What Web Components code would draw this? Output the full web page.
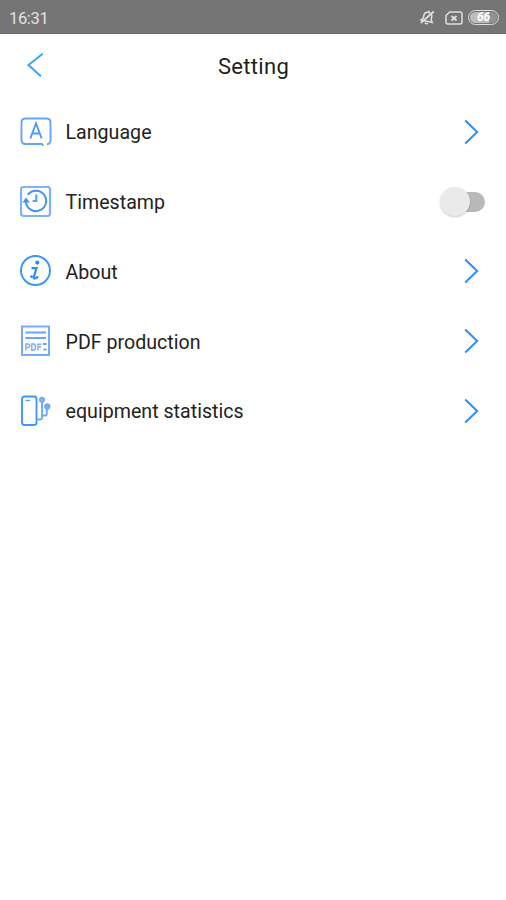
<!DOCTYPE html>
<html lang="en">
<head>
<meta charset="utf-8">
<title>Setting</title>
<style>
html,body{margin:0;height:100%;background:#fff}
body{font-family:Roboto,"Liberation Sans",sans-serif;color:#222;overflow:hidden}
</style>
</head>
<body>
<settings-screen></settings-screen>
<script>
const define = (name, html, setup) => {
  const template = document.createElement('template');
  template.innerHTML = html;
  customElements.define(name, class extends HTMLElement {
    constructor() {
      super();
      this.attachShadow({ mode: 'open' }).append(template.content.cloneNode(true));
    }
    connectedCallback() { if (setup) setup(this); }
  });
};

define('status-bar', `
<style>
:host{display:flex;box-sizing:border-box;height:34px;padding:2px 7px 0 9px;background:#757575;border-bottom:1px solid #686868;align-items:center;color:#e2e2e2}
.time{flex:1;font-size:16.5px;line-height:20px;letter-spacing:-.35px;padding-top:2px}
svg{display:block;fill:none;stroke:#dedede;stroke-width:1.5}
.bell{margin-right:9px}.sim{margin-right:5px}
.battery{box-sizing:border-box;width:31px;height:15px;border:1.5px solid #dedede;border-radius:8px;padding:1px;display:flex}
.level{flex:1;border-radius:6px;background:linear-gradient(90deg,#bdbdbd 70%,#929292 70%);color:#fff;font-size:12px;line-height:11px;font-weight:700;font-style:italic;text-align:center;letter-spacing:-.2px}
</style>
<span class="time">16:31</span>
<svg class="bell" width="17" height="17" viewBox="0 0 17 17"><g transform="rotate(12 8.500 8.500)"><path d="M2.800 12.300 4.500 10V7Q4.700 3.300 8.500 3.300T12.500 7v3l1.700 2.300ZM8.500 1.500v1.800M7 14q1.500 1.500 3 0"/></g><path d="M1.800 14 14.800 2.500" stroke-width="1.700"/></svg>
<svg class="sim" width="18" height="14" viewBox="0 0 18 14"><path d="M4.700 1H15q2 0 2 2v8q0 2-2 2H3q-2 0-2-2V4.500Z"/><path d="m6.500 5 5 4.500m0-4.500-5 4.500" stroke-width="1.900"/></svg>
<div class="battery"><span class="level">66</span></div>`);

define('title-bar', `
<style>
:host{display:grid;grid-template-columns:1fr auto 1fr;align-items:center;height:63px;box-sizing:border-box;padding:0 27px}
svg{display:block;margin-top:-1px;fill:none;stroke:#31a5f5;stroke-width:1.9}
h1{margin:2px 0 0 1px;font-weight:400;font-size:22px;line-height:30px;letter-spacing:.3px}
</style>
<svg width="17" height="24" viewBox="0 0 17 24"><path d="M15.700.8 1.400 12l12.500 11.300"/></svg>
<h1><slot></slot></h1>`);

define('chevron-right', `
<style>:host{display:block;margin-right:7px}svg{display:block;fill:none;stroke:#2c8df3;stroke-width:2}</style>
<svg width="15" height="26" viewBox="0 0 15 26"><path d="m1.200 1.500 12 11.500-12 11.500"/></svg>`);

define('toggle-switch', `
<style>
:host{display:flex;align-items:center;width:46px;height:30px;box-sizing:border-box}
.thumb{width:30px;height:29px;border-radius:50%;background:#eaeaea;box-shadow:0 1px 2px #0003;z-index:1}
.track{width:30px;height:20px;border-radius:10px;background:#b9b9b9;margin-left:-15px}
</style>
<span class="thumb"></span><span class="track"></span>`);

const icons = {
  language: '<path stroke="#64a5fc" d="M22 28H5.500q-4 0-4-4V6.500q0-4 4-4h21q4 0 4 4V24q0 4-3.500 4.200"/><path stroke="#64a5fc" d="m21.700 27.500 1.500 2.200"/><path d="m10.300 22.500 5.700-15 5.700 15M12.200 17.500h7.600" stroke-width="1.900"/>',
  time: '<rect x="1" y="1" width="29" height="29" rx="2.500" stroke="#7eb0fd" stroke-width="2.200"/><path stroke="#4791f3" stroke-width="2" d="M7.800 8.800A10.200 10.200 0 1 1 6.100 17.500V14"/><path fill="#4791f3" stroke="none" d="m2.400 16.500 3.600-5 3.800 5Z"/><path d="M16.300 8.500V16M16.300 15h-3.600" stroke="#5799f7" stroke-width="2"/>',
  about: '<circle cx="15.500" cy="15.500" r="14.500" stroke="#3997f7"/><circle cx="17.300" cy="7.600" r="2.100" fill="#2e8df2" stroke="none"/><path d="M11.500 13.200h5l-2.700 8.600q-.5 2 1.200 1.700 1.900-.5 3-2.200M10.500 22.300l2-1.500" stroke="#2e8df2" stroke-width="2.200"/>',
  pdf: '<path stroke="#76abfd" stroke-width="2" d="M2 1.500h27v28.500H2Z"/><path stroke="#65a6fc" d="M5.500 7.500h20.500M5.500 13h20.500M23 19h3.500M23.500 24.500h3"/><path stroke="#7caffc" stroke-width="1.400" d="M5.800 25.500v-6.500h2.200q1.800 0 1.800 1.700T8 22.500H5.800M11.800 19v6.200H13q2.500 0 2.500-3T13.500 19ZM18 25.500v-6.300h3.500M18 22h3"/>',
  equipment: '<rect x="2" y="1.500" width="14.500" height="28.500" rx="2.500" stroke="#3d98fa" stroke-width="1.900"/><path stroke="#539ff6" stroke-width="1.400" d="M5.500 5.500H10"/><path stroke="#6dacfc" stroke-width="1.900" d="M17 24.500h3q2 0 2-2V6M22.500 20.500h2.500q1.800 0 1.800-2V12"/><circle cx="22" cy="4.800" r="2.100" fill="#8bbdfc" stroke="#6dacfc"/><circle cx="27.300" cy="11.500" r="2.200" fill="#6dacfc" stroke="#6dacfc"/>'
};

define('setting-icon', `
<style>:host{display:block;flex:none}svg{display:block;fill:none;stroke:#4e9af8;stroke-width:1.900}</style>
<svg width="32" height="32" viewBox="0 0 32 32"></svg>`,
  el => { el.shadowRoot.querySelector('svg').innerHTML = icons[el.getAttribute('name')]; });

define('setting-row', `
<style>
:host{display:flex;align-items:center;height:69.800px;padding:0 20px 0 20px;box-sizing:border-box;font-size:19.600px;line-height:28px;letter-spacing:.02px}
.label{flex:1;margin-left:13.500px;padding-top:2.500px;white-space:nowrap}
</style>
<slot name="icon"></slot><span class="label"><slot></slot></span><slot name="action"></slot>`);

define('settings-screen', `
<style>:host{display:block;height:100vh;background:#fff}</style>
<status-bar></status-bar>
<title-bar>Setting</title-bar>
<main>
<setting-row><setting-icon slot="icon" name="language"></setting-icon>Language<chevron-right slot="action"></chevron-right></setting-row>
<setting-row><setting-icon slot="icon" name="time"></setting-icon>Timestamp<toggle-switch slot="action"></toggle-switch></setting-row>
<setting-row><setting-icon slot="icon" name="about"></setting-icon>About<chevron-right slot="action"></chevron-right></setting-row>
<setting-row><setting-icon slot="icon" name="pdf"></setting-icon>PDF production<chevron-right slot="action"></chevron-right></setting-row>
<setting-row><setting-icon slot="icon" name="equipment"></setting-icon>equipment statistics<chevron-right slot="action"></chevron-right></setting-row>
</main>`);
</script>
</body>
</html>
